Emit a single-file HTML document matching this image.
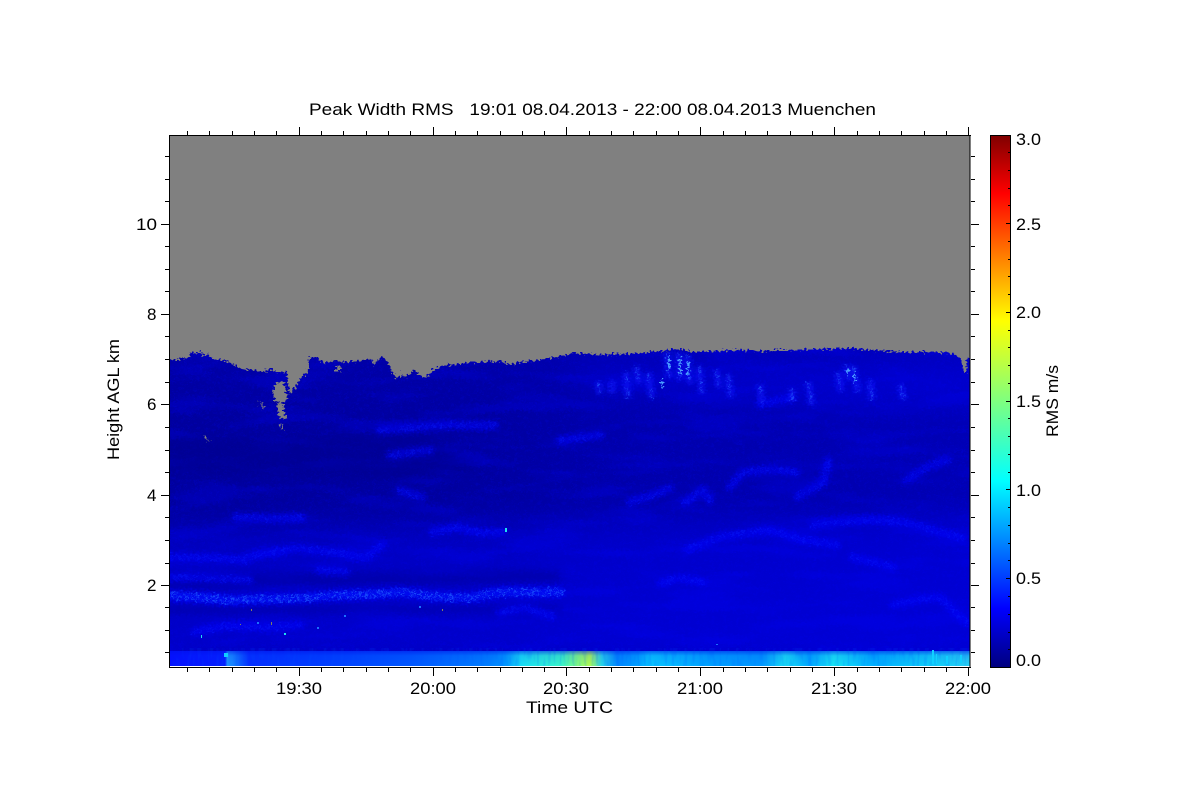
<!DOCTYPE html>
<html><head><meta charset="utf-8"><title>Peak Width RMS</title>
<style>html,body{margin:0;padding:0;background:#fff;width:1200px;height:800px;overflow:hidden}svg{display:block}text{font-family:"Liberation Sans",sans-serif;font-size:17px;fill:#000}</style></head>
<body>
<svg width="1200" height="800" viewBox="0 0 1200 800" xmlns="http://www.w3.org/2000/svg">
<defs>
<linearGradient id="base" x1="0" y1="350" x2="0" y2="667" gradientUnits="userSpaceOnUse">
<stop offset="0" stop-color="#0000a6"/><stop offset=".2" stop-color="#00009e"/><stop offset=".45" stop-color="#00009c"/><stop offset=".7" stop-color="#0000aa"/><stop offset=".95" stop-color="#0000b4"/><stop offset="1" stop-color="#0000b4"/>
</linearGradient>
<linearGradient id="right" x1="169" y1="0" x2="970" y2="0" gradientUnits="userSpaceOnUse">
<stop offset="0" stop-color="#0000ff" stop-opacity="0"/><stop offset=".4" stop-color="#0000ff" stop-opacity=".03"/><stop offset=".55" stop-color="#0000ff" stop-opacity=".14"/><stop offset="1" stop-color="#0000ff" stop-opacity=".24"/>
</linearGradient>
<linearGradient id="jet" x1="0" y1="667" x2="0" y2="135" gradientUnits="userSpaceOnUse">
<stop offset="0" stop-color="#00007f"/><stop offset=".11" stop-color="#0000ff"/><stop offset=".35" stop-color="#00ffff"/><stop offset=".5" stop-color="#7fff7f"/><stop offset=".65" stop-color="#ffff00"/><stop offset=".89" stop-color="#ff0000"/><stop offset="1" stop-color="#7f0000"/>
</linearGradient>
<linearGradient id="low" x1="169" y1="0" x2="970" y2="0" gradientUnits="userSpaceOnUse">
<stop offset="0" stop-color="#0410ff"/><stop offset=".07" stop-color="#0420ff"/><stop offset=".073" stop-color="#20a0ff"/><stop offset=".085" stop-color="#1070ff"/><stop offset=".1" stop-color="#0430ff"/><stop offset=".2" stop-color="#0040ff"/><stop offset=".3" stop-color="#0058ff"/><stop offset=".4" stop-color="#0080ff"/><stop offset=".42" stop-color="#0098ff"/><stop offset=".44" stop-color="#18e0f4"/><stop offset=".49" stop-color="#38f8c8"/><stop offset=".51" stop-color="#80ff80"/><stop offset=".525" stop-color="#b0ff50"/><stop offset=".54" stop-color="#28d8e8"/><stop offset=".56" stop-color="#0088ff"/><stop offset=".585" stop-color="#00a0ff"/><stop offset=".6" stop-color="#08c8ff"/><stop offset=".68" stop-color="#00a0ff"/><stop offset=".74" stop-color="#0098ff"/><stop offset=".77" stop-color="#18e0f4"/><stop offset=".8" stop-color="#00a8ff"/><stop offset=".83" stop-color="#18e8f4"/><stop offset=".88" stop-color="#00b0ff"/><stop offset=".95" stop-color="#10d0f8"/><stop offset="1" stop-color="#28d0f4"/>
</linearGradient>
<linearGradient id="lowTop" x1="0" y1="651" x2="0" y2="667" gradientUnits="userSpaceOnUse">
<stop offset="0" stop-color="#0010e8" stop-opacity=".55"/><stop offset=".3" stop-color="#0010e8" stop-opacity=".12"/><stop offset="1" stop-color="#0010e8" stop-opacity="0"/>
</linearGradient>
<filter id="b1" filterUnits="userSpaceOnUse" x="100" y="300" width="950" height="400"><feGaussianBlur stdDeviation="2.4"/></filter>
<filter id="b2" filterUnits="userSpaceOnUse" x="100" y="300" width="950" height="400"><feGaussianBlur stdDeviation="4"/></filter>
<filter id="b3" filterUnits="userSpaceOnUse" x="50" y="250" width="1100" height="500"><feGaussianBlur stdDeviation="14"/></filter>
<filter id="nA" filterUnits="userSpaceOnUse" x="169" y="340" width="802" height="327" color-interpolation-filters="sRGB">
<feTurbulence type="fractalNoise" baseFrequency=".012 .07" numOctaves="4" seed="7"/>
<feColorMatrix type="matrix" values="0 0 0 0 0  0 0 0 0 0  0 0 0 0 1  4 0 0 0 -1.9"/>
</filter>
<filter id="nB" filterUnits="userSpaceOnUse" x="169" y="340" width="802" height="327" color-interpolation-filters="sRGB">
<feTurbulence type="fractalNoise" baseFrequency=".33 .4" numOctaves="2" seed="11"/>
<feColorMatrix type="matrix" values="0 0 0 0 0  0 0 0 0 .04  0 0 0 0 1  4 0 0 0 -1.9"/>
</filter>
<filter id="nC" filterUnits="userSpaceOnUse" x="169" y="648" width="802" height="20" color-interpolation-filters="sRGB">
<feTurbulence type="fractalNoise" baseFrequency=".25 .05" numOctaves="2" seed="4"/>
<feColorMatrix type="matrix" values="0 0 0 0 0  0 0 0 0 .35  0 0 0 0 1  5 0 0 0 -2.4"/>
</filter>
<filter id="sp" filterUnits="userSpaceOnUse" x="169" y="340" width="802" height="327" color-interpolation-filters="sRGB">
<feTurbulence type="fractalNoise" baseFrequency=".35 .45" numOctaves="2" seed="9" result="t"/>
<feColorMatrix in="t" type="matrix" values="0 0 0 0 0  0 0 0 0 0  0 0 0 0 0  7 0 0 0 -3.5" result="m"/>
<feComposite in="SourceGraphic" in2="m" operator="in"/>
</filter>
<filter id="disp" filterUnits="userSpaceOnUse" x="140" y="320" width="860" height="370" color-interpolation-filters="sRGB">
<feTurbulence type="fractalNoise" baseFrequency=".42 .5" numOctaves="1" seed="5" result="t"/>
<feDisplacementMap in="SourceGraphic" in2="t" scale="9" xChannelSelector="R" yChannelSelector="G"/>
</filter>
<clipPath id="plot"><rect x="170" y="136" width="800" height="530"/></clipPath>
<clipPath id="blue"><polygon points="140,358 178,360 181,358 188,358 192,351 197,354 200,351 203,356 208,354 212,358 218,360 225,361 230,362 237,367 245,370 250,369 258,371 262,372 270,369 278,373 285,372 287,373 288,383 290,394 298,383 303,375 308,373 309,362 310,357 317,357 322,362 327,363 335,361 347,362 360,361 372,359 373,365 377,361 382,357 387,360 390,366 393,374 397,379 400,372 405,378 413,370 420,375 427,378 432,370 440,367 447,365 460,364 470,362 485,362 500,361 510,365 515,363 530,361 550,358 566,355 570,353 585,354 600,355 620,354 640,353 660,351 668,351 672,349 680,349 690,352 700,352 720,351 740,350 760,351 780,350 800,350 825,349 850,348 870,350 900,352 930,352 950,353 958,356 962,362 964,373 966,373 967,358 1000,358 1000,690 140,690"/></clipPath>
<g id="bands" fill="none" stroke-linecap="round" stroke-linejoin="round">
<polyline points="246,558 270,553 296,548 332,552 366,558 382,545"/>
<polyline points="169,557 210,558 246,560"/>
<polyline points="432,532 459,527 480,533 502,532"/>
<polyline points="319,570 346,572"/>
<polyline points="169,577 200,578 250,580"/>
<polyline points="236,517 270,519 302,518"/>
<polyline points="399,490 410,494 422,497"/>
<polyline points="630,502 650,496 670,488"/>
<polyline points="685,502 703,490 710,500"/>
<polyline points="730,487 743,472 770,469 797,472"/>
<polyline points="797,497 823,483 828,460"/>
<polyline points="687,550 720,537 770,530 803,540 837,545"/>
<polyline points="813,525 870,520 903,522 963,538"/>
<polyline points="853,557 893,567"/>
<polyline points="907,480 925,468 947,460"/>
<polyline points="195,632 225,626 270,628 300,625"/>
<polyline points="500,612 525,608 552,616"/>
<polyline points="560,440 600,435"/>
<polyline points="380,430 450,425 495,425"/>
<polyline points="390,455 430,450"/>
<polyline points="660,583 680,578 703,582"/>
<polyline points="893,605 915,600 940,597 955,612 967,623"/>
<polyline points="760,404 790,398"/>
</g>
<g id="main" fill="none" stroke-linecap="round" stroke-linejoin="round">
<polyline points="169,595 200,597 230,600 265,599 300,598 340,595 370,594 400,592 430,596 470,598 500,592 530,592 560,592"/>
</g>
<path id="streaks" fill="none" d="M612 380V394M626 372L628 398M636 366L639 384M648 372L652 398M667 352L669 378M678 352L680 380M687 355L690 384M699 366L702 394M716 370L719 388M728 374L731 398M760 384L762 404M792 388V402M808 382L812 406M838 372L841 392M846 365L849 380M853 366L858 392M870 380L872 400M598 382L600 394M900 384L904 400"/>
</defs>

<rect width="1200" height="800" fill="#fff"/>
<rect x="169" y="135" width="801" height="532" fill="#808080"/>

<g clip-path="url(#plot)">
<g filter="url(#disp)">
<g clip-path="url(#blue)">
<rect x="140" y="340" width="860" height="350" fill="url(#base)"/>
<rect x="140" y="340" width="860" height="350" fill="url(#right)"/>
<rect x="169" y="340" width="802" height="327" filter="url(#nA)" opacity=".22"/>
<rect x="169" y="340" width="802" height="327" filter="url(#nB)" opacity=".16"/>

<g fill="#0000ff" filter="url(#b3)" opacity=".3">
<polygon points="560,368 1020,362 1020,405 860,410 720,400 600,392"/>
<polygon points="120,530 1020,515 1020,660 120,660"/>
</g>
<g fill="#000088" filter="url(#b2)" opacity=".4">
<polygon points="120,440 420,435 480,470 400,480 120,470"/>
<polygon points="120,575 560,570 560,582 120,590"/>
<polygon points="120,606 560,606 560,612 120,614"/>
</g>
<use href="#bands" stroke="#0000ff" stroke-width="9" filter="url(#b1)" opacity=".5"/>
<use href="#bands" stroke="#0820ff" stroke-width="6" filter="url(#sp)" opacity=".38"/>
<use href="#main" stroke="#0008ff" stroke-width="10" filter="url(#b1)" opacity=".7"/>
<use href="#main" stroke="#2060ff" stroke-width="8" filter="url(#sp)" opacity=".7"/>
<use href="#streaks" stroke="#0818ff" stroke-width="7" filter="url(#b1)" opacity=".6"/>
<use href="#streaks" stroke="#2868ff" stroke-width="2.5" filter="url(#sp)" opacity=".6"/>
<g fill="#4a9cff"><rect x="668" y="356" width="2" height="14"/><rect x="679" y="358" width="2" height="16"/><rect x="687" y="360" width="2" height="16"/><rect x="661" y="380" width="2" height="8"/><rect x="854" y="372" width="1" height="10"/><rect x="847" y="368" width="2" height="7"/></g>
</g>
<g fill="#808080">
<polygon points="274,385 279,383 283,382 286,390 287,398 285,402 279,403 274,399 273,392"/>
<polygon points="277,403 282,403 286,418 281,419 278,415"/>
<polygon points="280,424 282,424 283,429 281,430"/>
<polygon points="204,435 205,435 207,439 210,441 209,442 205,440"/>
<polygon points="258,400 259,400 264,408 263,409"/>
<rect x="335" y="369" width="5" height="3"/><rect x="337" y="366" width="3" height="3"/>
<rect x="398" y="370" width="3" height="6"/><rect x="403" y="369" width="3" height="8"/><rect x="408" y="368" width="3" height="6"/>
</g>
</g>

<rect x="169" y="651" width="802" height="16" fill="url(#low)"/>
<rect x="169" y="651" width="802" height="16" filter="url(#nC)" opacity=".14"/>
<rect x="169" y="651" width="802" height="16" fill="url(#lowTop)"/>
<g fill="#10d0ff"><rect x="932" y="650" width="2" height="14"/><rect x="936" y="654" width="1" height="10"/><rect x="960" y="655" width="2" height="8"/><rect x="224" y="653" width="4" height="4"/><rect x="946" y="656" width="2" height="8"/></g>
<g fill="#20e0f0"><rect x="505" y="528" width="2" height="4"/><rect x="284" y="633" width="2" height="2"/><rect x="201" y="635" width="1" height="3"/></g>
<g fill="#1c70ff"><rect x="317" y="627" width="2" height="2"/><rect x="257" y="622" width="2" height="2"/><rect x="344" y="615" width="2" height="2"/><rect x="419" y="606" width="2" height="2"/><rect x="716" y="644" width="2" height="1"/></g>
<g fill="#808060"><rect x="251" y="609" width="1" height="2"/><rect x="271" y="622" width="1" height="3"/><rect x="442" y="609" width="1" height="2"/><rect x="240" y="624" width="1" height="1"/></g>
</g>

<rect x="990" y="135" width="20" height="532" fill="url(#jet)"/>

<path fill="none" stroke="#000" stroke-width="1" shape-rendering="crispEdges" d="M990.5 135.5H1010.5V667.5H990.5Z"/>
<path fill="none" stroke="#fff" stroke-width="1" shape-rendering="crispEdges" d="M170 666.5H970"/>
<path fill="none" stroke="#000" stroke-width="1.4" shape-rendering="crispEdges" d="M169.5 135V667M970 135V667M169 135.5H971M169 667.5H971"/>

<path fill="none" stroke="#000" stroke-width="1" shape-rendering="crispEdges" d="
M187.5 131V135M209.5 131V135M232.5 131V135M254.5 131V135M276.5 131V135M299.5 127V135M321.5 131V135M343.5 131V135M366.5 131V135M388.5 131V135M410.5 131V135M433.5 127V135M455.5 131V135M477.5 131V135M500.5 131V135M522.5 131V135M544.5 131V135M566.5 127V135M589.5 131V135M611.5 131V135M633.5 131V135M656.5 131V135M678.5 131V135M700.5 127V135M723.5 131V135M745.5 131V135M767.5 131V135M790.5 131V135M812.5 131V135M834.5 127V135M857.5 131V135M879.5 131V135M901.5 131V135M924.5 131V135M946.5 131V135M968.5 127V135
M187.5 668V672M209.5 668V672M232.5 668V672M254.5 668V672M276.5 668V672M299.5 668V676M321.5 668V672M343.5 668V672M366.5 668V672M388.5 668V672M410.5 668V672M433.5 668V676M455.5 668V672M477.5 668V672M500.5 668V672M522.5 668V672M544.5 668V672M566.5 668V676M589.5 668V672M611.5 668V672M633.5 668V672M656.5 668V672M678.5 668V672M700.5 668V676M723.5 668V672M745.5 668V672M767.5 668V672M790.5 668V672M812.5 668V672M834.5 668V676M857.5 668V672M879.5 668V672M901.5 668V672M924.5 668V672M946.5 668V672M968.5 668V676
M165 156.5H169M165 179.5H169M165 201.5H169M161 224.5H169M165 246.5H169M165 269.5H169M165 291.5H169M161 314.5H169M165 336.5H169M165 359.5H169M165 382.5H169M161 404.5H169M165 427.5H169M165 450.5H169M165 472.5H169M161 495.5H169M165 517.5H169M165 540.5H169M165 563.5H169M161 585.5H169M165 607.5H169M165 630.5H169M165 652.5H169
M971 156.5H975M971 179.5H975M971 201.5H975M971 224.5H979M971 246.5H975M971 269.5H975M971 291.5H975M971 314.5H979M971 336.5H975M971 359.5H975M971 382.5H975M971 404.5H979M971 427.5H975M971 450.5H975M971 472.5H975M971 495.5H979M971 517.5H975M971 540.5H975M971 563.5H975M971 585.5H979M971 607.5H975M971 630.5H975M971 652.5H975
M1008 152.5H1010M1008 170.5H1010M1008 188.5H1010M1008 205.5H1010M1006 223.5H1010M1008 241.5H1010M1008 259.5H1010M1008 276.5H1010M1008 294.5H1010M1006 312.5H1010M1008 330.5H1010M1008 347.5H1010M1008 365.5H1010M1008 383.5H1010M1006 401.5H1010M1008 418.5H1010M1008 436.5H1010M1008 454.5H1010M1008 472.5H1010M1006 489.5H1010M1008 507.5H1010M1008 525.5H1010M1008 543.5H1010M1008 560.5H1010M1006 578.5H1010M1008 596.5H1010M1008 614.5H1010M1008 632.5H1010M1008 649.5H1010"/>

<text x="309" y="115" textLength="567" lengthAdjust="spacingAndGlyphs" xml:space="preserve">Peak Width RMS   19:01 08.04.2013 - 22:00 08.04.2013 Muenchen</text>

<text x="136" y="230" textLength="21" lengthAdjust="spacingAndGlyphs">10</text>
<text x="147" y="320">8</text>
<text x="147" y="410">6</text>
<text x="147" y="501">4</text>
<text x="147" y="591">2</text>

<text x="276" y="694" textLength="46" lengthAdjust="spacingAndGlyphs">19:30</text>
<text x="410" y="694" textLength="46" lengthAdjust="spacingAndGlyphs">20:00</text>
<text x="543" y="694" textLength="46" lengthAdjust="spacingAndGlyphs">20:30</text>
<text x="677" y="694" textLength="46" lengthAdjust="spacingAndGlyphs">21:00</text>
<text x="811" y="694" textLength="46" lengthAdjust="spacingAndGlyphs">21:30</text>
<text x="945" y="694" textLength="46" lengthAdjust="spacingAndGlyphs">22:00</text>
<text x="526" y="713" textLength="87" lengthAdjust="spacingAndGlyphs">Time UTC</text>

<text transform="translate(119,460) rotate(-90)" textLength="121" lengthAdjust="spacingAndGlyphs">Height AGL km</text>
<text transform="translate(1058,437) rotate(-90)" textLength="72" lengthAdjust="spacingAndGlyphs">RMS m/s</text>

<text x="1016" y="145" textLength="25" lengthAdjust="spacingAndGlyphs">3.0</text>
<text x="1016" y="230" textLength="25" lengthAdjust="spacingAndGlyphs">2.5</text>
<text x="1016" y="318" textLength="25" lengthAdjust="spacingAndGlyphs">2.0</text>
<text x="1016" y="407" textLength="25" lengthAdjust="spacingAndGlyphs">1.5</text>
<text x="1016" y="496" textLength="25" lengthAdjust="spacingAndGlyphs">1.0</text>
<text x="1016" y="584" textLength="25" lengthAdjust="spacingAndGlyphs">0.5</text>
<text x="1016" y="666" textLength="25" lengthAdjust="spacingAndGlyphs">0.0</text>
</svg>
</body></html>
